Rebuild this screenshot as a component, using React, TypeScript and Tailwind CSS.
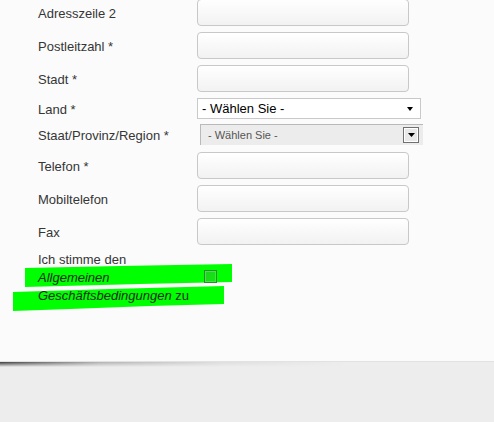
import type { ReactNode } from "react";

const FIELD =
  "h-[27px] w-[212px] rounded-[4px] border border-[#c8c8c8] bg-gradient-to-b from-white to-[#f2f2f2]";

function Row({ label, className, children }: { label: string; className?: string; children: ReactNode }) {
  return (
    <div className={`flex items-center ${className ?? ""}`}>
      <span className="w-[159px] shrink-0 pt-[2px] text-[13px] leading-none text-[#363636]">{label}</span>
      {children}
    </div>
  );
}

function TextField() {
  return <div className={FIELD} />;
}

function CountrySelect() {
  return (
    <div className="flex h-[21px] w-[224px] items-center justify-between border border-[#c9c9c9] bg-white pl-[4px] pr-[7px]">
      <span className="text-[13px] leading-none text-black">- Wählen Sie -</span>
      <svg width="6" height="4" viewBox="0 0 6 4">
        <path d="M0 0h6L3 4z" fill="#000" />
      </svg>
    </div>
  );
}

function RegionSelect() {
  return (
    <div className="ml-[3px] flex h-[21px] w-[223px] items-center justify-between border-l border-t border-[#b9b9b9] bg-[#ececec] pl-[7px] pr-[4px]">
      <span className="text-[11px] leading-none text-[#555]">- Wählen Sie -</span>
      <span className="flex h-[16px] w-[16px] items-center justify-center border border-[#707070] bg-[#e9e9e9] shadow-[inset_0_0_0_1px_#fff]">
        <svg width="7" height="4" viewBox="0 0 7 4">
          <path d="M0 0h7L3.5 4z" fill="#000" />
        </svg>
      </span>
    </div>
  );
}

export default function App() {
  return (
    <div className="relative h-[422px] w-full overflow-hidden bg-[#ededed] font-['Liberation_Sans',Arial,sans-serif]">
      <div className="relative h-[363px] border-b border-[#e2e2e2] bg-[#fbfbfb]">
        <div className="-mt-px flex flex-col pl-[38px]">
          <Row label="Adresszeile 2">
            <TextField />
          </Row>
          <Row label="Postleitzahl *" className="mt-[6px]">
            <TextField />
          </Row>
          <Row label="Stadt *" className="mt-[6px]">
            <TextField />
          </Row>
          <Row label="Land *" className="mt-[6px]">
            <CountrySelect />
          </Row>
          <Row label="Staat/Provinz/Region *" className="mt-[5px]">
            <RegionSelect />
          </Row>
          <Row label="Telefon *" className="mt-[7px]">
            <TextField />
          </Row>
          <Row label="Mobiltelefon" className="mt-[6px]">
            <TextField />
          </Row>
          <Row label="Fax" className="mt-[6px]">
            <TextField />
          </Row>
        </div>

        {/* terms agreement, marked with highlighter strokes */}
        <div className="relative mt-[6px] pl-[38px] text-[13px] leading-[18px]">
          <svg className="absolute left-0 top-0" width="240" height="64" viewBox="0 0 240 64">
            <polygon points="25,17 120,15 232,13 232,31 140,33 25,36" fill="#00ff00" />
            <polygon points="13,41 110,38 224,35 224,53 150,55 70,58 13,60" fill="#00ff00" />
          </svg>
          <span className="absolute left-[204px] top-[19px] h-[13px] w-[13px] border border-[#2d8b2d] bg-gradient-to-br from-[#1fd21f] to-[#0bea0b] shadow-[inset_0_0_0_1px_#3fe83f]" />
          <div className="relative text-[#363636]">Ich stimme den</div>
          <div className="relative italic text-[#1f2a1f]">Allgemeinen</div>
          <div className="relative text-[#1f2a1f]">
            <span className="italic">Geschäftsbedingungen</span> zu
          </div>
        </div>
      </div>
      <div className="h-[5px] bg-[linear-gradient(to_right,rgba(0,0,0,0.75),rgba(0,0,0,0.25)_20%,rgba(0,0,0,0.06)_45%,transparent_70%)] [mask-image:linear-gradient(to_bottom,#000,transparent)]" />
    </div>
  );
}
